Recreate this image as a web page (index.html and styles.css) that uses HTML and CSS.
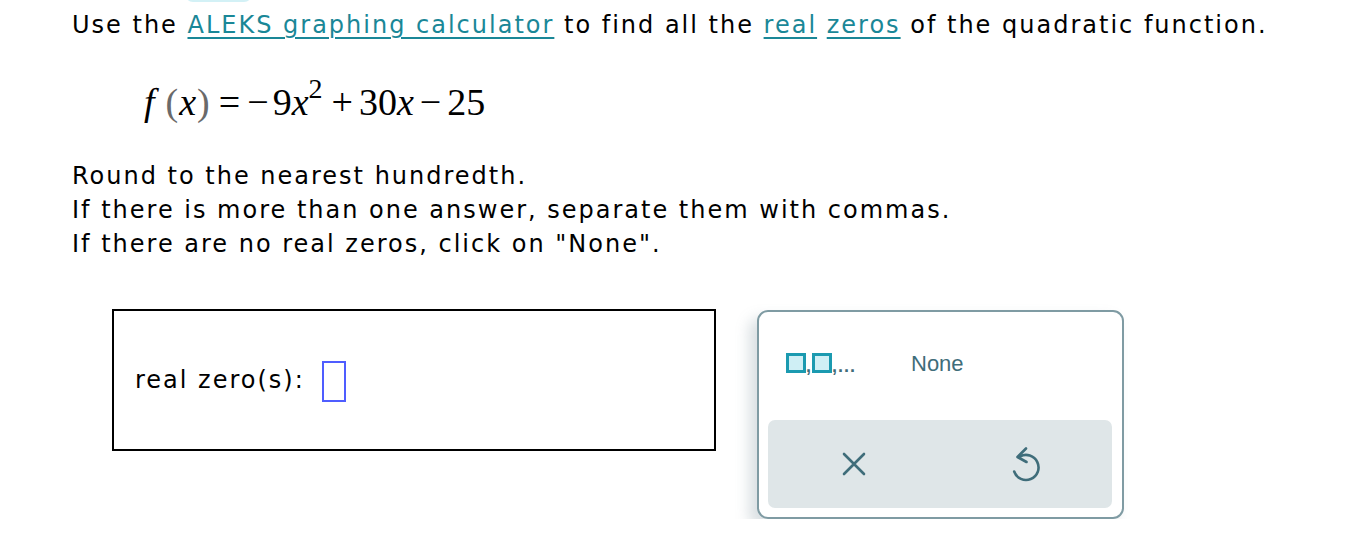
FILE: index.html
```html
<!DOCTYPE html>
<html>
<head>
<meta charset="utf-8">
<link rel="stylesheet" href="styles.css">
</head>
<body>
<div class="tab"></div>
<main class="page">
  <p class="prompt">Use the <a class="lnk">ALEKS graphing calculator</a> to find all the <a class="lnk">real</a> <a class="lnk">zeros</a> of the quadratic function.</p>
  <div class="math"><i class="fn">f</i><span class="paren">(</span><i>x</i><span class="paren">)</span><span class="op eq">=</span><span class="neg">&minus;</span>9<i>x</i><span class="sup">2</span><span class="op">+</span>30<i>x</i><span class="op">&minus;</span>25</div>
  <div class="instr">
    <p>Round to the nearest hundredth.</p>
    <p>If there is more than one answer, separate them with commas.</p>
    <p>If there are no real zeros, click on "None".</p>
  </div>
  <div class="answer-row">
    <div class="answer">
      <span class="label">real zero(s):</span>
      <span class="slot"></span>
    </div>
    <div class="keypad">
      <div class="keys">
        <div class="key multi"><span class="sq"></span><span class="cm">,</span><span class="sq"></span><span class="cm">,...</span></div>
        <div class="key none">None</div>
      </div>
      <div class="actions">
        <div class="act">
          <svg width="24" height="24" viewBox="0 0 24 24"><path d="M2 2 L22 22 M22 2 L2 22" stroke="#3f6d7a" stroke-width="2.6" stroke-linecap="round" fill="none"/></svg>
        </div>
        <div class="act">
          <svg width="28" height="35" viewBox="0 0 28 35"><path d="M8 9.5 A12.5 12.5 0 1 1 2.2 24.5" stroke="#3f6d7a" stroke-width="2.6" stroke-linecap="round" fill="none"/><path d="M14 1.5 L5.5 10 L14.5 15" stroke="#3f6d7a" stroke-width="2.6" stroke-linecap="round" stroke-linejoin="round" fill="none"/></svg>
        </div>
      </div>
    </div>
  </div>
</main>
</body>
</html>
```
FILE: styles.css
```css
html, body { margin: 0; padding: 0; background: #fff; }
body { font-family: "DejaVu Sans", Verdana, sans-serif; color: #000; letter-spacing: 2px; }
.tab { position: absolute; left: 185px; top: -8px; width: 67px; height: 10px; background: #d3f1f6; border-radius: 0 0 8px 8px; }
.page { padding: 8px 0 0 72px; }
.prompt { margin: 0; font-size: 24px; line-height: 34px; white-space: nowrap; }
.lnk { color: #1a8797; text-decoration: underline; text-decoration-thickness: 1.5px; text-underline-offset: 4px; }
.math { font-family: "Liberation Serif", "Times New Roman", serif; font-size: 38px; letter-spacing: 0; margin: 38px 0 0 72px; line-height: 44px; height: 44px; white-space: nowrap; }
.math i { font-style: italic; }
.math .fn { margin-right: 10px; }
.math .paren { color: #6a6a6a; margin: 0 1px; }
.math .op { margin: 0 6px; }
.math .eq { margin: 0 7px 0 8px; }
.math .neg { margin-right: 4px; }
.math .sup { font-size: 28px; position: relative; top: -17px; margin-left: 0; margin-right: 3px; }
.instr { margin-top: 35px; font-size: 24px; line-height: 34px; }
.instr p { margin: 0; white-space: nowrap; }
.answer-row { display: flex; align-items: flex-start; margin-top: 49px; margin-left: 40px; gap: 41px; }
.answer { width: 579px; height: 138px; border: 2px solid #000; display: flex; align-items: center; padding-left: 21px; margin-top: -1px; }
.label { font-size: 24px; }
.slot { display: inline-block; width: 20px; height: 37px; border: 2px solid #4f5dff; margin-left: 17px; margin-top: 3px; }
.keypad { width: 367px; height: 209px; border: 2px solid #7f9ba3; border-radius: 11px; box-shadow: -8px 8px 14px rgba(120,140,150,0.28); padding: 0 10px 9px 9px; box-sizing: border-box; display: flex; flex-direction: column; letter-spacing: 0; }
.keys { flex: 1; display: flex; align-items: flex-start; padding-top: 41px; }
.key { color: #3f6d7a; font-family: "Liberation Sans", Arial, sans-serif; font-size: 22px; }
.multi { display: flex; align-items: flex-end; margin-left: 18px; width: 125px; }
.sq { display: inline-block; width: 14px; height: 14px; border: 3px solid #1b9ab0; background: #cfeff5; }
.cm { color: #3f6d7a; font-size: 18px; line-height: 14px; font-weight: bold; letter-spacing: 1px; }
.none { line-height: 22px; margin-top: 0; }
.actions { height: 88px; background: #dfe6e8; border-radius: 7px; display: flex; align-items: center; }
.act { flex: 1; display: flex; justify-content: center; align-items: center; }
```
